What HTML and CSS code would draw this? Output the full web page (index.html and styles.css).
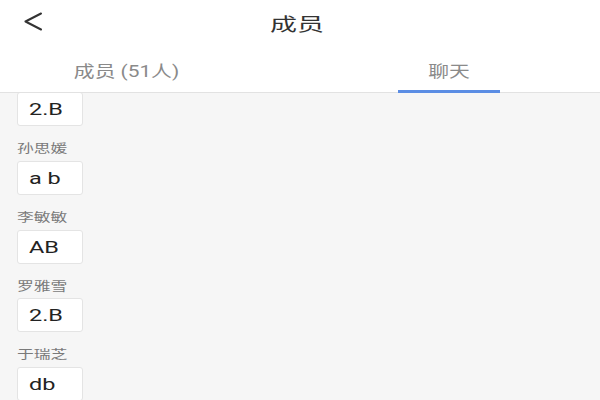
FILE: index.html
```html
<!DOCTYPE html>
<html lang="zh-CN">
<head>
  <meta charset="UTF-8">
  <meta name="viewport" content="width=device-width, initial-scale=1.0">
  <title>成员</title>
  <link rel="stylesheet" href="styles.css">
</head>
<body>
<div class="page">
  <div class="top-bar">
    <div class="back">
      <svg width="18" height="20" viewBox="0 0 18 20">
        <polyline points="17,1.5 1.5,9.5 17,17.5" fill="none" stroke="#333" stroke-width="2" stroke-linecap="round" stroke-linejoin="round"/>
      </svg>
    </div>
    <div class="title"><span>成员</span></div>
    <div></div>
  </div>

  <div class="tabs">
    <div class="tab tab-members"><span>成员 (51人)</span></div>
    <div class="tab tab-chat active"><span>聊天</span></div>
  </div>

  <div class="list-wrap">
    <div class="list">
      <div class="answer"><span>2.B</span></div>
      <div class="name"><span>孙思媛</span></div>
      <div class="answer"><span>a b</span></div>
      <div class="name"><span>李敏敏</span></div>
      <div class="answer"><span>AB</span></div>
      <div class="name"><span>罗雅雪</span></div>
      <div class="answer"><span>2.B</span></div>
      <div class="name"><span>于瑞芝</span></div>
      <div class="answer"><span>db</span></div>
    </div>
  </div>
</div>
</body>
</html>
```

FILE: styles.css
```css
body {
  margin: 0;
  font-family: Roboto, "Noto Sans CJK SC", sans-serif;
  background: #f6f6f6;
}
.page {
  width: 600px;
  height: 400px;
  overflow: hidden;
  display: flex;
  flex-direction: column;
}
.top-bar {
  height: 45px;
  background: #fff;
  display: grid;
  grid-template-columns: 1fr auto 1fr;
  align-items: center;
}
.back {
  padding-left: 24px;
  padding-bottom: 2px;
  display: flex;
}
.title {
  font-size: 18px;
  color: #333;
  margin-right: 6px;
}
.title span {
  display: inline-block;
  transform: scaleX(1.5);
}
.tabs {
  height: 47px;
  background: #fff;
  border-bottom: 1px solid #e2e2e2;
  display: flex;
}
.tab {
  display: flex;
  align-items: center;
  justify-content: center;
  padding-top: 3px;
  box-sizing: border-box;
  font-size: 16px;
  color: #8a8a8a;
}
.tab span {
  display: inline-block;
  transform: scaleX(1.3);
}
.tab-members {
  width: 254px;
}
.tab-chat {
  width: 102px;
  margin-left: 144px;
}
.tab.active {
  border-bottom: 3px solid #5b8de4;
  margin-bottom: -1px;
  padding-top: 5px;
}
.list-wrap {
  flex: 1;
  padding-top: 4px;
  overflow: hidden;
}
.list {
  margin-top: -5px;
  padding-left: 17px;
}
.answer {
  width: 66px;
  height: 34px;
  box-sizing: border-box;
  background: #fff;
  border: 1px solid #e4e4e4;
  border-radius: 3px;
  display: flex;
  align-items: center;
  padding-left: 11px;
  font-size: 17px;
  color: #222;
}
.answer span {
  display: inline-block;
  transform: scaleX(1.38);
  transform-origin: left center;
}
.name {
  height: 34.75px;
  box-sizing: border-box;
  padding-top: 17px;
  font-size: 12px;
  line-height: 13px;
  color: #7a7a7a;
}
.name span {
  display: inline-block;
  transform: scaleX(1.4);
  transform-origin: left center;
}
```
